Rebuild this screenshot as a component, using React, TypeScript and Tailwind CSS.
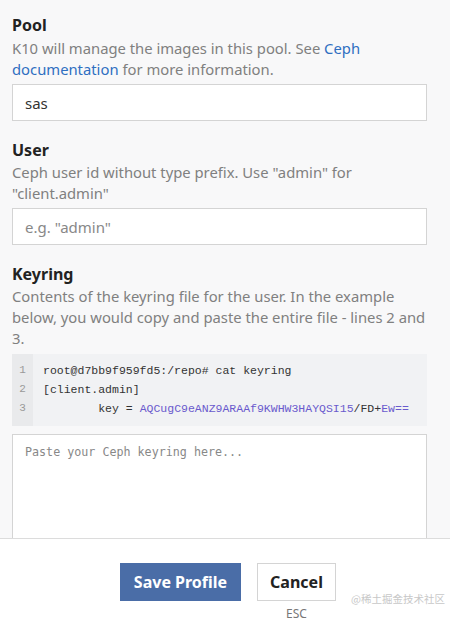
import React from 'react'

const sans = "font-['Noto_Sans','Open_Sans',sans-serif]"

function Field({ title, children }: { title: string; children: React.ReactNode }) {
  return (
    <div className="flex flex-col">
      <h2 className="text-[16px] leading-[22px] font-bold text-[#222]">{title}</h2>
      {children}
    </div>
  )
}

export default function App() {
  return (
    <div className={`relative w-[450px] h-[619px] overflow-hidden bg-[#f8f8f9] ${sans}`}>
      <div className="h-[538px] overflow-hidden pl-3 pr-[23px] pt-[14px] flex flex-col">
        <Field title="Pool">
          <p className="text-[14.8px] leading-[21px] text-[#808080] mt-[2px]">
            K10 will manage the images in this pool. See <span className="text-[#2f6fc1]">Ceph documentation</span> for more information.
          </p>
          <input
            className="mt-1 h-[37px] w-full border border-[#d4d4d4] bg-white px-3 text-[15px] text-[#333] outline-none"
            defaultValue="sas"
          />
        </Field>

        <div className="mt-[18px]">
          <Field title="User">
            <p className="text-[14.8px] leading-[21px] text-[#808080] mt-[1px]">
              Ceph user id without type prefix. Use "admin" for "client.admin"
            </p>
            <input
              className="mt-[4px] h-[37px] w-full border border-[#d4d4d4] bg-white px-3 text-[15px] text-[#333] placeholder:text-[#888] outline-none"
              placeholder='e.g. "admin"'
            />
          </Field>
        </div>

        <div className="mt-[18px]">
          <Field title="Keyring">
            <p className="text-[14.8px] leading-[21px] text-[#808080] mt-[1px]">
              Contents of the keyring file for the user. In the example below, you would copy and paste the entire file - lines 2 and 3.
            </p>
            <div className="mt-[5px] flex bg-[#f1f2f4] h-[72px]">
              <div className="w-[21px] bg-[#e9eaec] pt-[7px] flex flex-col items-center text-[11px] leading-[19px] text-[#999] font-['Liberation_Mono',monospace]">
                <span>1</span>
                <span>2</span>
                <span>3</span>
              </div>
              <pre className="pl-[10px] pt-[7px] text-[11.5px] leading-[19px] text-[#333] font-['Liberation_Mono',monospace]">
                <div>root@d7bb9f959fd5:/repo# cat keyring</div>
                <div>[client.admin]</div>
                <div>{'        key = '}<span className="text-[#6a5acd]">AQCugC9eANZ9ARAAf9KWHW3HAYQSI15</span>/FD+<span className="text-[#6a5acd]">Ew==</span></div>
              </pre>
            </div>
            <textarea
              className="mt-2 h-[140px] w-full resize-y border border-[#d4d4d4] bg-white px-3 py-[8px] text-[11.7px] leading-[18px] font-['DejaVu_Sans_Mono',monospace] placeholder:text-[#888] outline-none"
              placeholder="Paste your Ceph keyring here..."
            />
          </Field>
        </div>
      </div>

      <div className="h-[81px] border-t border-[#dcdcdc] bg-white flex justify-center pt-[24px] pl-[6px]">
        <div className="flex gap-4 items-start">
          <button className="h-[38px] w-[121px] bg-[#4a6da7] text-white text-[16px] font-bold">Save Profile</button>
          <div className="flex flex-col items-center">
            <button className="h-[38px] w-[79px] border border-[#d4d4d4] bg-white text-[#222] text-[16px] font-bold">Cancel</button>
            <span className="mt-[5px] text-[12px] leading-[16px] text-[#777]">ESC</span>
          </div>
        </div>
      </div>

      <span className="absolute left-[351px] top-[591px] whitespace-nowrap text-[10.5px] text-[#c8c8c8] font-['Noto_Sans_CJK_SC',sans-serif]">@稀土掘金技术社区</span>
    </div>
  )
}
